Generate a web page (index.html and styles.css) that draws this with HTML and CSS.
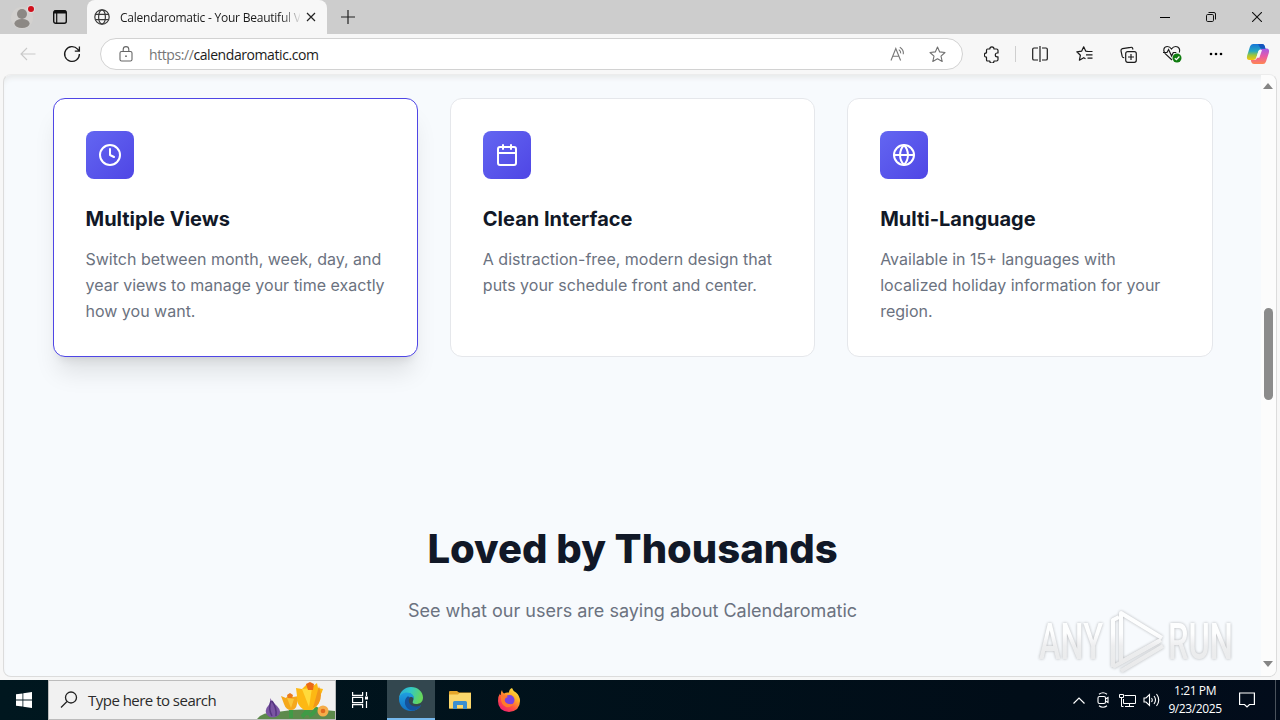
FILE: index.html
```html
<!DOCTYPE html>
<html lang="en">
<head>
 <meta charset="utf-8">
 <title>Calendaromatic - Your Beautiful View</title>
 <link rel="stylesheet" href="styles.css">
</head>
<body>

<!-- browser window -->
<div class="window">
 <div class="tabstrip">
  <div class="profile"><svg width="26" height="28" viewBox="0 0 26 28"><circle cx="13" cy="15" r="11" fill="#d3d1cf"/><circle cx="13" cy="11" r="5" fill="#8c8884"/><ellipse cx="13" cy="20.5" rx="7.6" ry="4.5" fill="#8c8884"/><circle cx="22" cy="6" r="4" fill="#e3d9da"/><circle cx="22" cy="6" r="3" fill="#d0101c"/></svg></div>
  <div class="tabmenu"><svg width="14" height="14" viewBox="0 0 14 14"><rect x=".7" y=".7" width="12.6" height="12.6" rx="2" fill="none" stroke="#111" stroke-width="1.4"/><path d="M1 2h12" stroke="#111" stroke-width="3"/><path d="M3.700 3v10" stroke="#111" stroke-width="1.200"/></svg></div>
  <div class="tab">
   <svg class="favicon" width="16" height="16" viewBox="0 0 16 16" fill="none" stroke="#3b3b3b" stroke-width="1.2"><circle cx="8" cy="8" r="7.2"/><ellipse cx="8" cy="8" rx="3.4" ry="7.2"/><path d="M1.5 5.3h13M1.5 10.7h13"/></svg>
   <span class="tabtitle">Calendaromatic - Your Beautiful V</span>
   <svg width="10" height="10" viewBox="0 0 10 10" stroke="#222" stroke-width="1.2"><path d="M1 1l8 8M9 1l-8 8"/></svg>
  </div>
  <div class="newtab"><svg width="14" height="14" viewBox="0 0 14 14" stroke="#222" stroke-width="1.2"><path d="M7 0v14M0 7h14"/></svg></div>
  <div class="controls">
   <span><svg width="10" height="10" viewBox="0 0 10 10"><path d="M0 5.5h10" stroke="#000"/></svg></span>
   <span><svg width="10" height="10" viewBox="0 0 10 10" fill="none" stroke="#111"><rect x=".5" y="2.5" width="7" height="7" rx="1.2"/><path d="M2.500.5H8A1.500 1.500 0 0 1 9.500 2v5.500"/></svg></span>
   <span><svg width="10" height="10" viewBox="0 0 10 10" stroke="#111" stroke-width="1.1"><path d="M0 0l10 10M10 0L0 10"/></svg></span>
  </div>
 </div>

 <div class="toolbar">
  <div class="btn"><svg width="16" height="14" viewBox="0 0 16 14" fill="none" stroke="#c9c9c9" stroke-width="1.1"><path d="M15.5 7H1M7 1L1 7l6 6"/></svg></div>
  <div class="btn"><svg width="18" height="18" viewBox="0 0 18 18" fill="none" stroke="#1b1b1b" stroke-width="1.3"><path d="M16.4 9A7.4 7.4 0 1 1 14.6 4.2L16.2 6M16.4 1.5V6.2h-4.6"/></svg></div>
  <div class="address">
   <svg class="lock" width="14" height="16" viewBox="0 0 14 16" fill="none" stroke="#666" stroke-width="1.1"><rect x="1" y="5.5" width="12" height="9.5" rx="1.6"/><path d="M4.2 5.5V3.4a2.8 2.8 0 0 1 5.6 0v2.1"/><circle cx="7" cy="10.2" r=".9" fill="#666" stroke="none"/></svg>
   <span class="url"><span>https://</span>calendaromatic.com</span>
   <svg class="aloud" width="16" height="16" viewBox="0 0 16 16" fill="none" stroke="#777" stroke-width="1.1"><path d="M1 14.500L5.800 2.500l4.800 12M2.700 10.300h6.200M8.800 3.600a4 4 0 0 1 1.900 3.800M9.800 1.200a7 7 0 0 1 3.500 7"/></svg>
   <svg width="17" height="17" viewBox="0 0 17 17" fill="none" stroke="#707070" stroke-width="1.1" stroke-linejoin="round"><path d="M8.500 1l2.200 4.900 5.300.6-4 3.600 1.200 5.400-4.700-2.700-4.700 2.700L5 10.100 1 6.500l5.300-.6z"/></svg>
  </div>
  <div class="btn puzzle"><svg width="16" height="17" viewBox="0 0 16 17" fill="none" stroke="#1b1b1b" stroke-width="1.2" stroke-linejoin="round"><path d="M3.500 3h2.300a2.100 2.100 0 0 1 4.200 0h2.500q1.500 0 1.500 1.500V7h-.8a1.900 1.900 0 0 0 0 3.800h.8v2.700q0 1.500-1.500 1.500H10a2.100 2.100 0 0 1-4.200 0H3.500Q2.500 15 2.500 13.500v-2.300a2.100 2.100 0 0 1 0-4.400V4.500Q2.500 3 3.500 3z"/></svg></div>
  <div class="sep"></div>
  <div class="btn"><svg width="16" height="16" viewBox="0 0 16 16" fill="none" stroke="#1b1b1b" stroke-width="1.2"><path d="M6 2H2Q.7 2 .7 3.300v9.400Q.7 14 2 14h4M8 0v16M10 2h4q1.300 0 1.300 1.300v9.400q0 1.300-1.300 1.300h-4"/></svg></div>
  <div class="btn"><svg width="17" height="16" viewBox="0 0 17 16" fill="none" stroke="#1b1b1b" stroke-width="1.2" stroke-linejoin="round"><path d="M11.500 5.400L9.800 5.200 7.700 .8 5.600 5.200 .8 5.800l3.600 3.400-1 5 4.300-2.500 1.800 1.100M11 5.500h5.500M10 8.800h6.500M11.500 12.100h5"/></svg></div>
  <div class="btn"><svg width="17" height="17" viewBox="0 0 17 17" fill="none" stroke="#1b1b1b" stroke-width="1.200"><rect x="5.700" y="5.700" width="10.600" height="10.600" rx="2"/><path d="M11 8v6M8 11h6M13 3.500L12.600 2.300Q12.200 1 10.700 1.300L2.500 2.700Q.8 3.100 1 4.800l1.200 5.600q.4 1.500 2 1.300"/></svg></div>
  <div class="btn"><svg width="20" height="18" viewBox="0 0 20 18" fill="none" stroke="#1b1b1b" stroke-width="1.200"><path d="M10 15L3.200 8.600C.3 5.500 2 1.500 5.300 1.500c2 0 3.200 1 4.200 2.500 1-1.500 2.300-2.500 4.200-2.500 3.200 0 4.800 3 3.600 6M1 7.500h4l1.600-3 3 6.500 1.700-3.500h3"/><circle cx="15" cy="13" r="4.500" fill="#107c10" stroke="none"/><path d="M12.800 13.200l1.600 1.500 3-3.200" stroke="#fff"/></svg></div>
  <div class="btn"><svg width="14" height="4" viewBox="0 0 14 4"><circle cx="2" cy="2" r="1.300"/><circle cx="7" cy="2" r="1.300"/><circle cx="12" cy="2" r="1.300"/></svg></div>
  <div class="btn copilot"><svg width="24" height="22" viewBox="0 0 24 22">
   <defs>
    <linearGradient id="ca" x1="0" y1="0" x2="0" y2="1"><stop offset="0" stop-color="#1675d8"/><stop offset=".45" stop-color="#26a9c0"/><stop offset=".7" stop-color="#9cc63d"/><stop offset="1" stop-color="#f8c60d"/></linearGradient>
    <linearGradient id="cb" x1="0" y1="0" x2="0" y2="1"><stop offset="0" stop-color="#a25be8"/><stop offset=".5" stop-color="#e95aa5"/><stop offset="1" stop-color="#ff8651"/></linearGradient>
   </defs>
   <path d="M7 1h9q2 0 2.700 2l.8 3h-4q-2.500 0-3.300 2.500L10.500 14q-.8 3-3.500 3H3.500Q0 17 1.200 12.500L4 3.500Q4.800 1 7 1z" fill="url(#ca)"/>
   <path d="M17 21H8q-2 0-2.700-2l-.5-2H8q2.500 0 3.300-2.500L13.500 8q.8-2.500 3.500-2.500h3.500Q24 5.500 22.800 10L20 18.500Q19.200 21 17 21z" fill="url(#cb)"/>
   <path d="M12 1h4q2 0 2.700 2l.8 2.700h-3.300q-2 0-2.700-2z" fill="#1555bd"/>
   <path d="M10.300 14.800L13 7h3l-2.700 7.800z" fill="#f7f7f7"/>
  </svg></div>
 </div>

 <!-- the web page -->
 <div class="viewport">
  <div class="page">
   <section class="features">
    <div class="card active">
     <div class="icon"><svg width="24" height="24" viewBox="0 0 24 24"><circle cx="12" cy="12" r="10"/><path d="M12 6v6l4 2"/></svg></div>
     <h3>Multiple Views</h3>
     <p>Switch between month, week, day, and year views to manage your time exactly how you want.</p>
    </div>
    <div class="card">
     <div class="icon"><svg width="24" height="24" viewBox="0 0 24 24"><rect x="3" y="4" width="18" height="18" rx="2"/><path d="M16 2v4M8 2v4M3 10h18"/></svg></div>
     <h3>Clean Interface</h3>
     <p>A distraction-free, modern design that puts your schedule front and center.</p>
    </div>
    <div class="card">
     <div class="icon"><svg width="24" height="24" viewBox="0 0 24 24"><circle cx="12" cy="12" r="10"/><path d="M2 12h20M12 2a15.300 15.300 0 0 1 4 10 15.300 15.300 0 0 1-4 10 15.300 15.300 0 0 1-4-10 15.300 15.300 0 0 1 4-10z"/></svg></div>
     <h3>Multi-Language</h3>
     <p>Available in 15+ languages with localized holiday information for your region.</p>
    </div>
   </section>
   <section class="loved">
    <h2>Loved by Thousands</h2>
    <p>See what our users are saying about Calendaromatic</p>
   </section>
  </div>
  <div class="scrollbar">
   <svg width="10" height="6" viewBox="0 0 10 6"><path d="M0 6l5-6 5 6z" fill="#858585"/></svg>
   <div class="thumb"></div>
   <svg class="down" width="10" height="6" viewBox="0 0 10 6"><path d="M0 0l5 6 5-6z" fill="#858585"/></svg>
  </div>
 </div>
</div>

<!-- watermark over the page -->
<svg class="watermark" width="240" height="76" viewBox="0 0 240 76">
 <defs><linearGradient id="wm" gradientUnits="userSpaceOnUse" x1="0" y1="6" x2="0" y2="68"><stop offset=".4" stop-color="#fff"/><stop offset=".6" stop-color="#ececed"/><stop offset="1" stop-color="#e6e7e8"/></linearGradient></defs>
 <g class="wmtext" fill="url(#wm)">
  <text x="9" y="56" textLength="64" lengthAdjust="spacingAndGlyphs">ANY</text>
  <text x="138" y="56" textLength="65" lengthAdjust="spacingAndGlyphs">RUN</text>
 </g>
 <g fill="none" stroke="url(#wm)" stroke-width="4" stroke-linejoin="round">
  <path d="M129 38L91 59V10l41 25"/>
  <path d="M89 14L83 17V64M83 64L131 37M91 68L133 43"/>
 </g>
</svg>

<!-- taskbar -->
<div class="taskbar">
 <div class="start"><svg width="16" height="16" viewBox="0 0 16 16" fill="#fff"><path d="M0 2.300l6.500-.9v6.200H0zM7.300 1.300L16 0v7.600H7.300zM0 8.400h6.500v6.200L0 13.700zM7.300 8.400H16V16l-8.700-1.300z"/></svg></div>
 <div class="search">
  <svg width="18" height="18" viewBox="0 0 18 18" fill="none" stroke="#222" stroke-width="1.300"><circle cx="11" cy="6.500" r="5.500"/><path d="M7 10.500L1 16.500"/></svg>
  <span>Type here to search</span>
  <svg class="flowers" width="78" height="38" viewBox="0 0 78 38">
   <path d="M0 38q5-7 20-7 26-5 58-1v8z" fill="#5d8a4c"/>
   <path d="M13 17q2 4 7 8 5 5 2 9-7 5-12 0-3-5 1-9 3-3 2-8z" fill="#7a55a3"/><path d="M14 20q-3 8 1 15M15 20q5 7 4 15" stroke="#553580" stroke-width="1.500" fill="none"/>
   <path d="M34 29v8M52 25q-2 6-7 11M52 25l-2 9M60 26q-3 7-8 9" stroke="#3f9b46" stroke-width="4" fill="none"/>
   <path d="M24 15l5 2 3-4 4 3 6-1-2 8q-1 6-6 6-5 0-7-6z" fill="#f5a81c"/><path d="M30 17l4 10 3-9z" fill="#f9c63a"/><path d="M30 14l3-2 3 2-1 3h-4z" fill="#eb7a1c"/>
   <path d="M39 7l6 1 5-5 5 3 5-4 1 5 5 1q-1 4-3 6 1 10-8 15h-8q-8-5-7-14z" fill="#fdb813"/><path d="M45 8l7 18 3-19z" fill="#ffda3b"/><path d="M62 5l-6 22q8-4 8-13z" fill="#f1971a"/><path d="M49 3l4-2 4 2-1 6h-5z" fill="#eb6a16"/>
   <circle cx="66" cy="30" r="5.500" fill="#f5ad4a"/><circle cx="66" cy="30" r="2.300" fill="#e06b1f"/>
  </svg>
 </div>
 <div class="app"><svg width="16" height="16" viewBox="0 0 16 16" fill="none" stroke="#fff" stroke-width="1.200"><path d="M.6 0v3.400h10V0M.6 16v-3.400h10V16M.6 5.400h10v5.200H.6zM14.500 0v4M14.500 9v7"/><rect x="13" y="4.500" width="3" height="3" fill="#fff" stroke="none"/></svg></div>
 <div class="app running"><svg width="24" height="24" viewBox="0 0 24 24">
  <defs>
   <linearGradient id="ea" x1="0" y1="0" x2="1" y2=".3"><stop offset="0" stop-color="#2aa5dc"/><stop offset=".5" stop-color="#32c9c4"/><stop offset="1" stop-color="#65d65c"/></linearGradient>
   <linearGradient id="eb" x1="0" y1="0" x2="0" y2="1"><stop offset="0" stop-color="#1f9fe0"/><stop offset="1" stop-color="#1270c4"/></linearGradient>
  </defs>
  <path d="M0 11C1 4 6 0 12 0c7 0 12 5 12 10.500 0 4.500-3 6.500-7 6.500-3 0-4-1.300-3-3 2-4-1-8-5-8-4 0-7 2-9 5z" fill="url(#ea)"/>
  <path d="M0 12C0 8 4 5.500 8 5.500c4.500 0 7.500 3 6.800 6.500-1-2-2.800-2.500-4-1.500C6 13 9 21.500 16 20.500c2.500-.3 4.500-1.300 6-2.300C20 22 16.500 24 12 24 5 24 0 18.500 0 12z" fill="url(#eb)"/>
  <path d="M8.500 9.500c-5 4-2.500 13 4.500 14 3 0 7-1.500 9-5.300-3 1.500-6.500 1.700-9.200.2-3-1.800-4-5.200-1.800-7.900-.7-1-1.800-1.300-2.500-1z" fill="#15529c"/>
 </svg></div>
 <div class="app"><svg width="22" height="20" viewBox="0 0 22 20"><path d="M0 2q0-1 1-1h7l2 1.500h12v15q0 1-1 1H1q-1 0-1-1z" fill="#e5a62a"/><path d="M0 4.500h9l1.500-1.500H22v15.500H0z" fill="#fbd76b"/><path d="M4 19v-6.500Q4 11 5.500 11h11q1.500 0 1.500 1.500V19h-4v-4H8v4z" fill="#3b8fd0"/></svg></div>
 <div class="app firefox"><svg width="24" height="24" viewBox="0 0 24 24">
  <defs><linearGradient id="fx" x1=".9" y1="0" x2=".2" y2="1"><stop offset="0" stop-color="#fff04a"/><stop offset=".35" stop-color="#ffae26"/><stop offset=".65" stop-color="#ff5340"/><stop offset="1" stop-color="#ee1a75"/></linearGradient></defs>
  <path d="M5 2q0 2 2 3.500Q9 4 12 4.500 12 1 15 0q1 3 4 4.500Q23 8 23 13q0 10-11 11Q1 23 1 13 1 8 3 5.500q0 1.500 1 1.500Q3.500 4 5 2z" fill="url(#fx)"/>
  <circle cx="12.500" cy="12" r="5" fill="#7a43e0"/><path d="M4 8q4-2 7 1-3 .5-3.500 3 1 5 8.500 4-2 4-7 3Q3 16 4 8z" fill="#ff7a2b"/>
 </svg></div>
 <div class="tray">
  <span><svg width="12" height="7" viewBox="0 0 12 7" fill="none" stroke="#fff" stroke-width="1.200"><path d="M.5 6.500L6 1l5.500 5.500"/></svg></span>
  <span><svg width="12" height="16" viewBox="0 0 12 16" fill="none" stroke="#fff" stroke-width="1.100"><rect x="1" y="4.500" width="7.500" height="7" rx="1.500"/><path d="M8.500 7l2.500-1.500v5L8.500 9M2 2.300Q6-.7 10 2.300M2 13.700q4 3 8 0"/></svg></span>
  <span><svg width="17" height="15" viewBox="0 0 17 15" fill="none" stroke="#fff"><path d="M5.500 2.500h11v8H4.500V6M10.500 10.500v3M6 13.500h9"/><path d="M.5 1.500h4v3h-4zM2.500 4.500v9h2"/></svg></span>
  <span><svg width="17" height="14" viewBox="0 0 17 14" fill="none" stroke="#fff" stroke-width="1.100"><path d="M1 5h2l3.500-3.500v11L3 9H1zM8.500 5q1.500 2 0 4M11 3q3 4 0 8M13.500 1q4.500 6 0 12"/></svg></span>
  <div class="clock"><div>1:21 PM</div><div>9/23/2025</div></div>
  <div class="notif"><svg width="16" height="16" viewBox="0 0 16 16" fill="none" stroke="#fff" stroke-width="1.200"><path d="M.6 1h14.800v11.500H10.500L8 15l-2.500-2.500H.6z"/></svg></div>
 </div>
</div>

</body>
</html>
```
FILE: styles.css
```css
* { box-sizing: border-box; }
body {
 margin:    0;
 width:     1280px;
 height:    720px;
 overflow:  hidden;
 display:   flex;
 flex-direction: column;
 position:  relative;
 font-family: "Open Sans", sans-serif;
 background: #f7f7f7;
}
svg { display: block; flex: none; }
h2, h3, p { margin: 0; }

/* browser chrome */
.window { height: 680px; display: flex; flex-direction: column; }
.tabstrip {
 height:  34px;
 display: flex;
 align-items: center;
 background: #cdcdcd;
}
.profile { width: 44px; padding-left: 9px; }
.tabmenu { width: 43px; padding-left: 9px; }
.tab {
 width:   240px;
 height:  34px;
 padding: 0 11px 0 7px;
 display: flex;
 align-items: center;
 background: #f7f7f7;
 border-radius: 8px 8px 0 0;
}
.tabtitle {
 width:  180px;
 flex:   none;
 margin: 0 6px 0 10px;
 white-space: nowrap;
 font-size:   12px;
 letter-spacing: -0.23px;
 color: #1b1b1b;
 -webkit-mask-image: linear-gradient(90deg, #000 160px, transparent 182px);
 mask-image: linear-gradient(90deg, #000 160px, transparent 182px);
}
.newtab { margin-left: 14px; }
.controls { display: flex; margin-left: auto; }
.controls span { width: 46px; display: flex; justify-content: center; }

.toolbar {
 height:  40px;
 padding-left: 6px;
 display: flex;
 align-items: center;
 background: #f7f7f7;
}
.btn {
 width:   44px;
 display: flex;
 justify-content: center;
}
.copilot { width: 40px; }
.puzzle { padding-left: 1px; }
.sep { width: 1px; height: 16px; margin: 0 2px; background: #cfcfcf; }
.address {
 width:   863px;
 height:  32px;
 margin:  0 6px;
 padding: 0 16px 0 18px;
 display: flex;
 align-items: center;
 background: #fff;
 border: 1px solid #d2d2d2;
 border-radius: 16px;
}
.url {
 margin-left: 16px;
 font-size: 14px;
 letter-spacing: -0.42px;
 color: #1b1b1b;
}
.url span { color: #767676; }
.aloud { margin: 0 23px 0 auto; }

.viewport {
 width:   1274px;
 height:  603px;
 margin:  0 3px;
 display: flex;
 overflow: hidden;
 border: 1px solid #dcdcdc;
 border-top-color: #ececec;
 border-radius: 8px;
 background: #f7fafd;
 box-shadow: inset 0 5px 5px -2px #e8eaeb;
}

/* calendaromatic page */
.page {
 width: 1257px;
 padding: 23.480px 48.500px 0;
 flex: none;
 font-family: "Inter", sans-serif;
 line-height: 1.6;
 color: #111827;
}
.features {
 display: grid;
 grid-template-columns: repeat(3, 1fr);
 gap: 32px;
 padding-bottom: 80px;
}
.card {
 padding: 32px;
 background: #fff;
 border: 1px solid #e5e7eb;
 border-radius: 12px;
}
.card.active {
 border-color: #4f46e5;
 box-shadow: 0 20px 25px -5px rgba(0,0,0,.1), 0 8px 10px -6px rgba(0,0,0,.1);
}
.icon {
 width:  48px;
 height: 48px;
 margin-bottom: 24px;
 display: flex;
 align-items: center;
 justify-content: center;
 background: linear-gradient(135deg, #6366f1, #4f46e5);
 border-radius: 8px;
}
.icon svg {
 fill: none;
 stroke: #fff;
 stroke-width: 2;
 stroke-linecap: round;
 stroke-linejoin: round;
}
.card h3 { font-size: 20px; font-weight: 700; margin-bottom: 12px; }
.card p  { font-size: 16px; color: #6b7280; }
.loved {
 padding-top: 80px;
 text-align:  center;
}
.loved h2 {
 font-size:   40px;
 font-weight: 800;
 margin-bottom: 16px;
}
.loved p { font-size: 18px; color: #6b7280; }

.scrollbar {
 width:   15px;
 padding: 8px 1px 9px 0;
 display: flex;
 flex-direction: column;
 align-items: center;
 background: #fcfcfc;
}
.thumb {
 width:  9px;
 height: 92px;
 margin-top: 219px;
 background: #8b8b8b;
 border-radius: 5px;
}
.down { margin-top: auto; }

.watermark {
 position: absolute;
 left: 1030px;
 top:  603px;
 filter: drop-shadow(0 0 1.500px rgba(0,0,0,.32));
 opacity: .85;
}
.wmtext {
 font-family: "Roboto", sans-serif;
 font-size:   50px;
 font-weight: 500;
}

/* windows taskbar */
.taskbar {
 height:  40px;
 display: flex;
 background: linear-gradient(90deg, #00171f, #010d18 80%, #020c1b);
}
.start, .app {
 width:   48px;
 display: flex;
 align-items: center;
 justify-content: center;
}
.search {
 width:   288px;
 height:  40px;
 padding-left: 11px;
 display: flex;
 align-items: center;
 background: #f1f1f1;
 border: 1px solid #bcbcbc;
 font-size: 15px;
 letter-spacing: -0.52px;
 color: #2b2b2b;
}
.search span { margin-left: 10px; }
.flowers { margin-left: auto; }
.running {
 margin: 0 1px 0 3px;
 background: #33474f;
 border-bottom: 2px solid #76b9ed;
}
.firefox { padding-left: 1px; }
.tray {
 margin-left: auto;
 display: flex;
 align-items: center;
 color: #fff;
}
.tray span { width: 24px; display: flex; justify-content: center; }
.clock {
 width: 64px;
 font-size:   12px;
 line-height: 18px;
 letter-spacing: -0.4px;
 text-align:  center;
}
.notif {
 width:  49px;
 height: 40px;
 display: flex;
 align-items: center;
 padding-left: 12px;
 margin-right: 4px;
 border-right: 1px solid #4a525c;
}
```
